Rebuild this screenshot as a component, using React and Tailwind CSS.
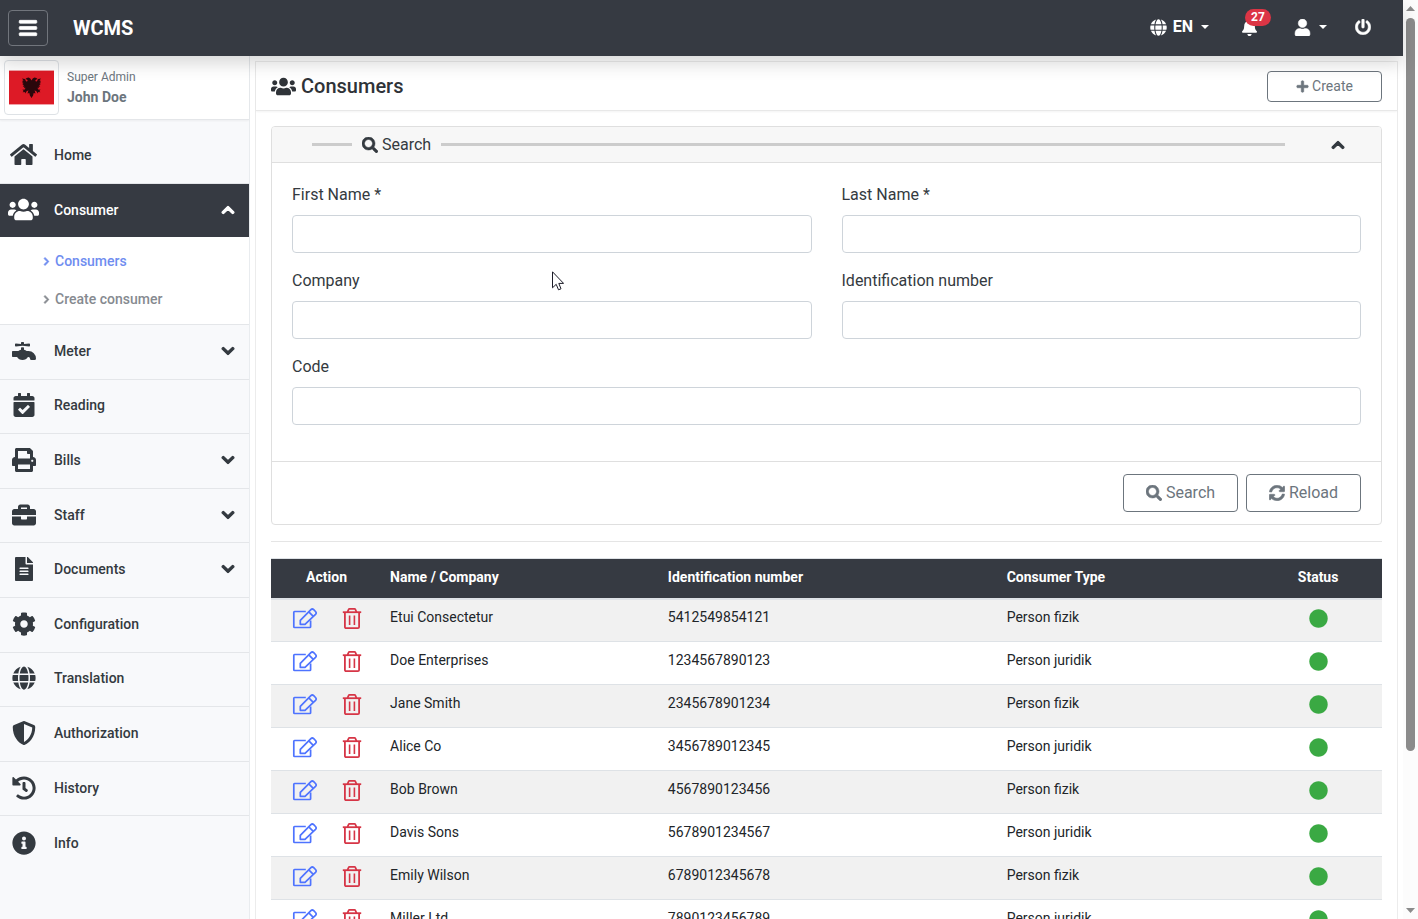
import { useState } from 'react';
import clsx from 'clsx';
import {
  FaBars, FaBell, FaBriefcase, FaCalendarCheck, FaChevronDown, FaChevronRight, FaChevronUp,
  FaCircle, FaCog, FaFaucet, FaFileAlt, FaGlobe, FaHistory, FaHome, FaInfoCircle, FaPlus,
  FaPowerOff, FaPrint, FaSearch, FaShieldAlt, FaSyncAlt, FaUser, FaUsers,
} from 'react-icons/fa';

const menu = [
  { label: 'Meter', icon: FaFaucet, children: true },
  { label: 'Reading', icon: FaCalendarCheck },
  { label: 'Bills', icon: FaPrint, children: true },
  { label: 'Staff', icon: FaBriefcase, children: true },
  { label: 'Documents', icon: FaFileAlt, children: true },
  { label: 'Configuration', icon: FaCog },
  { label: 'Translation', icon: FaGlobe },
  { label: 'Authorization', icon: FaShieldAlt },
  { label: 'History', icon: FaHistory },
  { label: 'Info', icon: FaInfoCircle },
];

const consumers = [
  { name: 'Etui Consectetur', number: '5412549854121', type: 'Person fizik' },
  { name: 'Doe Enterprises', number: '1234567890123', type: 'Person juridik' },
  { name: 'Jane Smith', number: '2345678901234', type: 'Person fizik' },
  { name: 'Alice Co', number: '3456789012345', type: 'Person juridik' },
  { name: 'Bob Brown', number: '4567890123456', type: 'Person fizik' },
  { name: 'Davis Sons', number: '5678901234567', type: 'Person juridik' },
  { name: 'Emily Wilson', number: '6789012345678', type: 'Person fizik' },
  { name: 'Miller Ltd.', number: '7890123456789', type: 'Person juridik' },
];

function Caret() {
  return <span className="border-x-4 border-t-4 border-x-transparent border-t-white" />;
}

function Flag() {
  return (
    <svg viewBox="0 0 45 35" className="w-full">
      <rect width="45" height="35" fill="#f0a0a6" />
      <rect y="1" width="45" height="33" fill="#dd1a26" />
      <path
        d="M22.500 10.500 21.300 8.600 19.600 7.600 17.600 8 16.200 9.300 18 9.600 18.700 10.800 17.800 11.800 16.600 10.600 15.800 9 13 8.500 14.500 10.500 12.900 10.900 14.400 12.200 12.900 12.800 14.600 13.900 13.300 14.800 15 15.500 13.800 16.800 15.600 16.800 14.900 18.200 16.600 17.800 15.500 19.800 13.400 19.400 14.600 21 13.600 22.300 15.700 21.900 16.200 23.500 17.400 21.500 19.400 20.300 18.500 23.500 20.300 22.900 20.900 25.500 22.500 28 24.100 25.500 24.700 22.900 26.500 23.500 25.600 20.300 27.600 21.500 28.800 23.500 29.300 21.900 31.400 22.300 30.400 21 31.600 19.400 29.500 19.800 28.400 17.800 30.100 18.200 29.400 16.800 31.200 16.800 30 15.500 31.700 14.800 30.400 13.900 32.100 12.800 30.600 12.200 32.100 10.900 30.500 10.500 32 8.500 29.200 9 28.400 10.600 27.200 11.800 26.300 10.800 27 9.600 28.800 9.300 27.400 8 25.400 7.600 23.700 8.600Z"
        fill="#2a070b"
      />
    </svg>
  );
}

function EditIcon() {
  return (
    <svg width="26" height="23" viewBox="0 0 26 23" fill="none" stroke="currentColor" strokeWidth="1.7" strokeLinejoin="round">
      <path d="M13.800 4.500H2.600A.8.800 0 0 0 1.800 5.300V19.700A.8.800 0 0 0 2.600 20.500H17.800A.8.800 0 0 0 18.600 19.700V13.500" />
      <path d="M8.300 17.300V13.300L18.900 2.700A2 2 0 0 1 21.700 2.700L23.500 4.500A2 2 0 0 1 23.500 7.300L13 17.300Z" />
      <path d="M16.800 4.800 21.300 9.300" />
    </svg>
  );
}

function TrashIcon() {
  return (
    <svg width="20" height="23" viewBox="0 0 20 23" fill="none" stroke="currentColor" strokeWidth="1.8" strokeLinejoin="round">
      <path d="M.8 5.200H19.200" />
      <path d="M5.500 5.200 6.600 2.500A1 1 0 0 1 7.500 1.900H12.500A1 1 0 0 1 13.400 2.500L14.500 5.200" />
      <path d="M2.900 5.200V20A1.200 1.200 0 0 0 4.100 21.200H15.900A1.200 1.200 0 0 0 17.100 20V5.200" />
      <path d="M7.600 8.500V18M12.400 8.500V18" strokeWidth="1.600" />
    </svg>
  );
}

function Topbar() {
  return (
    <header className="relative z-10 flex h-14 shrink-0 items-center bg-[#363a42] pl-2 pr-8 text-white shadow-[0_8px_16px_rgba(0,0,0,0.15)]">
      <button
        type="button"
        aria-label="Toggle menu"
        className="flex h-9 w-10 items-center justify-center rounded border border-[#71757c]"
      >
        <FaBars size={20} strokeWidth={20} />
      </button>
      <a href="#" className="ml-[25px] text-xl font-bold">WCMS</a>

      <nav className="ml-auto flex items-center gap-8 pb-0.5">
        <button type="button" className="flex items-center font-bold">
          <FaGlobe size={17} />
          <span className="ml-1.5 mr-2">EN</span>
          <Caret />
        </button>
        <button type="button" aria-label="Notifications" className="relative">
          <FaBell size={17} />
          <span className="absolute -top-2.5 left-1 rounded-full bg-[#dc3545] px-1.5 text-xs font-bold leading-[17px]">
            27
          </span>
        </button>
        <button type="button" aria-label="Account" className="ml-1 flex items-center gap-2">
          <FaUser size={17} strokeWidth={16} />
          <Caret />
        </button>
        <button type="button" aria-label="Log out" className="-ml-1">
          <FaPowerOff size={16} strokeWidth={16} />
        </button>
      </nav>
    </header>
  );
}

function MenuItem({ label, icon: Icon, iconSize = 24, chevron: Chevron, className }) {
  return (
    <a href="#" className={clsx('flex items-center pb-0.5 pr-3.5 text-sm font-medium', className)}>
      <span className="flex w-[47px] justify-center">
        <Icon size={iconSize} />
      </span>
      <span className="ml-[7px]">{label}</span>
      {Chevron && <Chevron size={14} strokeWidth={44} className="ml-auto" />}
    </a>
  );
}

function Sidebar() {
  return (
    <aside className="flex w-[250px] shrink-0 flex-col border-r border-[#e9ecef] bg-[#f8f9fb] text-[#343a40]">
      <div className="flex h-16 shrink-0 items-center border-b border-[#e4e6e9] bg-white pl-1 shadow-xs">
        <div className="flex size-[55px] items-center rounded border border-[#dee2e6] bg-white p-1">
          <Flag />
        </div>
        <div className="ml-2 pb-0.5 text-[#6c757d]">
          <p className="text-xs leading-5">Super Admin</p>
          <p className="text-sm font-bold leading-5">John Doe</p>
        </div>
      </div>

      <nav>
        <MenuItem
          label="Home"
          icon={FaHome}
          iconSize={27}
          className="h-16 border-b border-[#e4e6e9] pt-2"
        />
        <MenuItem
          label="Consumer"
          icon={FaUsers}
          iconSize={31}
          chevron={FaChevronUp}
          className="h-[53px] bg-[#363a42] text-white"
        />
        <div className="flex h-[88px] flex-col border-b border-[#e4e6e9] bg-white pl-[42px] pt-[5px] text-sm font-medium">
          <a href="#" className="flex h-[38px] items-center gap-1 text-[#6f8df0]">
            <FaChevronRight size={9} strokeWidth={44} />
            Consumers
          </a>
          <a href="#" className="flex h-[38px] items-center gap-1 text-[#868a90]">
            <FaChevronRight size={9} strokeWidth={44} />
            Create consumer
          </a>
        </div>
        <div className="grid h-[546px] auto-rows-fr">
          {menu.map((item) => (
            <MenuItem
              key={item.label}
              label={item.label}
              icon={item.icon}
              chevron={item.children && FaChevronDown}
              className="border-b border-[#e4e6e9] last:border-b-0"
            />
          ))}
        </div>
      </nav>
    </aside>
  );
}

function Field({ id, label, className }) {
  return (
    <div className={className}>
      <label htmlFor={id} className="mb-2 block leading-6">{label}</label>
      <input
        id={id}
        type="text"
        className="block h-[38px] w-full rounded border border-[#ced4da] bg-white px-3 outline-none focus:border-[#80bdff]"
      />
    </div>
  );
}

function SearchCard() {
  const [open, setOpen] = useState(true);

  return (
    <form
      onSubmit={(e) => e.preventDefault()}
      className="overflow-hidden rounded border border-[#dfdfdf]"
    >
      <div className="flex h-9 items-center border-b border-[#dfdfdf] bg-[#f7f7f7] pl-10 pr-9">
        <span className="h-[3px] w-10 bg-[#ccc]" />
        <h2 className="mx-2.5 flex items-center gap-1">
          <FaSearch size={16} strokeWidth={16} />
          Search
        </h2>
        <span className="h-[3px] flex-1 bg-[#ccc]" />
        <button
          type="button"
          aria-label="Toggle search"
          onClick={() => setOpen(!open)}
          className="ml-[46px]"
        >
          <FaChevronUp size={14} strokeWidth={44} />
        </button>
      </div>

      {open && (
        <>
          <div className="grid grid-cols-2 gap-x-[30px] gap-y-4 px-5 pb-9 pt-5">
            <Field id="first-name" label="First Name *" />
            <Field id="last-name" label="Last Name *" />
            <Field id="company" label="Company" />
            <Field id="identification" label="Identification number" />
            <Field id="code" label="Code" className="col-span-2" />
          </div>
          <div className="flex justify-end gap-2 border-t border-[#dfdfdf] px-5 py-3 text-[#6c757d]">
            <button
              type="submit"
              className="flex h-[38px] w-[115px] items-center justify-center gap-1 rounded border border-[#6c757d]"
            >
              <FaSearch size={16} strokeWidth={16} />
              Search
            </button>
            <button
              type="reset"
              className="flex h-[38px] w-[115px] items-center justify-center gap-1 rounded border border-[#6c757d]"
            >
              <FaSyncAlt size={16} strokeWidth={16} />
              Reload
            </button>
          </div>
        </>
      )}
    </form>
  );
}

function ConsumerTable() {
  return (
    <table className="w-full table-fixed border-t border-[#dee2e6] text-sm text-[#212529]">
      <thead>
        <tr className="h-10 border-b-2 border-[#dee2e6] bg-[#363a42] text-left text-white">
          <th className="w-[10%] pb-0.5 text-center">Action</th>
          <th className="w-[25%] px-2 pb-0.5">Name / Company</th>
          <th className="w-[30.5%] px-2 pb-0.5">Identification number</th>
          <th className="w-[23%] px-2 pb-0.5">Consumer Type</th>
          <th className="w-[11.5%] pb-0.5 text-center">Status</th>
        </tr>
      </thead>
      <tbody>
        {consumers.map((c) => (
          <tr key={c.number} className="h-[43px] border-b border-[#dee2e6] odd:bg-[#f1f1f1]">
            <td className="pb-1">
              <div className="flex justify-center gap-6">
                <button type="button" aria-label={`Edit ${c.name}`} className="text-[#4e73ff]">
                  <EditIcon />
                </button>
                <button type="button" aria-label={`Delete ${c.name}`} className="text-[#d63546]">
                  <TrashIcon />
                </button>
              </div>
            </td>
            <td className="px-2 pb-1.5">{c.name}</td>
            <td className="px-2 pb-1.5">{c.number}</td>
            <td className="px-2 pb-1.5">{c.type}</td>
            <td className="pb-1">
              <FaCircle size={19} className="mx-auto text-[#3aa943]" />
            </td>
          </tr>
        ))}
      </tbody>
    </table>
  );
}

// always visible page scrollbar
function Scrollbar() {
  return (
    <div aria-hidden="true" className="flex w-[15px] shrink-0 flex-col items-center bg-[#fcfcfc] py-1.5">
      <svg width="9" height="5" viewBox="0 0 9 5"><path d="M0 5 4.500 0 9 5Z" fill="#8b8b8b" /></svg>
      <div className="my-[7px] w-[9px] flex-1">
        <div className="h-[83%] rounded-full bg-[#8b8b8b]" />
      </div>
      <svg width="9" height="5" viewBox="0 0 9 5"><path d="M0 0 4.500 5 9 0Z" fill="#8b8b8b" /></svg>
    </div>
  );
}

export default function App() {
  return (
    <div className="relative flex h-screen overflow-hidden bg-white font-['Roboto',sans-serif] text-base text-[#343a40]">
      <div className="flex min-w-0 flex-1 flex-col">
        <Topbar />
        <div className="flex min-h-0 flex-1">
          <Sidebar />
          <main className="min-w-0 flex-1 overflow-hidden px-[5px] pt-[5px]">
            <section className="border border-[#ececec]">
              <div className="flex h-[49px] items-center justify-between border-b border-[#e8e8e8] px-[15px] shadow-xs">
                <h1 className="flex items-center gap-[5px] text-xl font-medium text-[#2f3338]">
                  <FaUsers size={25} />
                  Consumers
                </h1>
                <button
                  type="button"
                  className="flex h-[31px] w-[115px] items-center justify-center gap-[3px] rounded-sm border border-[#6c757d] text-sm text-[#6c757d]"
                >
                  <FaPlus size={13} strokeWidth={24} />
                  Create
                </button>
              </div>
              <div className="p-[15px]">
                <SearchCard />
                <hr className="my-4 border-[#e5e5e5]" />
                <ConsumerTable />
              </div>
            </section>
          </main>
        </div>
      </div>
      <Scrollbar />

      <svg
        aria-hidden="true"
        viewBox="0 0 12 20"
        className="pointer-events-none absolute left-[552px] top-[271px] h-5 w-3"
      >
        <path
          d="M0.500 0.800V16.800L4.200 13.300 6.500 18.800 9 17.800 6.800 12.400H11.600Z"
          fill="#fff"
          stroke="#1c1c28"
          strokeWidth="1"
        />
      </svg>
    </div>
  );
}
